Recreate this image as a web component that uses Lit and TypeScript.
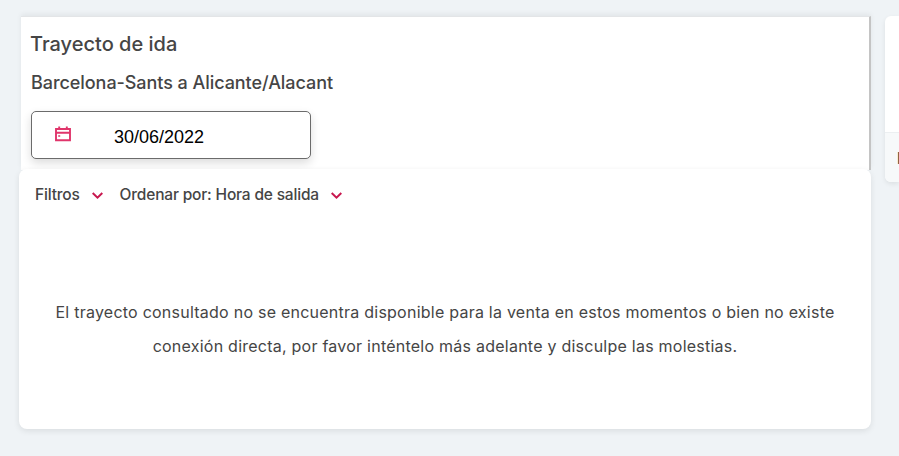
import { LitElement, html, css } from "lit";
import { customElement } from "lit/decorators.js";

const chevron = html`<svg class="chev" viewBox="0 0 11 7" width="11" height="7" fill="none" stroke="#c8184f" stroke-width="2"><path d="M.7 1 5.5 5.6 10.3 1"/></svg>`;

@customElement("app-root")
export class AppRoot extends LitElement {
  static styles = css`
    :host { display: block; width: 899px; height: 456px; background: #eff3f6; overflow: hidden; font-family: Inter, "Liberation Sans", sans-serif; color: #454545; }
    .page { display: grid; grid-template-columns: 852px 14px; column-gap: 14px; padding: 16px 0 0 19px; align-items: start; }
    .col { display: flex; flex-direction: column; }
    .top { margin: 0 0 0 2px; height: 154px; background: #fff; border-right: 2px solid #c4c4c4; border-top: 1px solid #e3e5e7; box-shadow: 0 -2px 5px rgba(0,0,0,.06); box-sizing: border-box; padding: 14px 0 0 9px; }
    h2 { margin: 0; font-size: 20px; line-height: 26px; font-weight: 550; letter-spacing: 0; }
    h3 { margin: 14px 0 0 1px; font-size: 18px; line-height: 24px; font-weight: 550; letter-spacing: -0.06px; }
    .date { margin: 16px 0 0 1px; width: 280px; height: 48px; box-sizing: border-box; background: #fff; border: 1px solid #6b6b6b; border-radius: 5px; box-shadow: 0 4px 10px rgba(0,0,0,.14); display: flex; align-items: center; padding: 4px 0 0 23px; font-family: "Liberation Sans", Arial, sans-serif; font-size: 18px; color: #000; }
    .date svg { margin-top: -6px; }
    .date span { margin-left: 43px; }
    .main { margin-top: -1px; height: 260px; background: #fff; border-radius: 8px; box-shadow: 0 2px 6px rgba(0,0,0,.09); box-sizing: border-box; }
    .filters { display: flex; align-items: center; padding: 16px 0 0 16px; font-size: 15.5px; line-height: 20px; font-weight: 500; letter-spacing: -0.18px; }
    .chev { margin: 1px 0 0 12px; }
    .second { margin-left: 17px; }
    .msg { margin: 90px 0 0; text-align: center; font-size: 16px; line-height: 34px; letter-spacing: 0.24px; }
    .side { height: 166px; background: #fff; border-radius: 6px 0 0 6px; box-shadow: 0 2px 5px rgba(0,0,0,.08); display: flex; flex-direction: column; justify-content: flex-end; }
    .tab { height: 49px; background: #f7f9fa; border-top: 1px solid #eceff1; border-radius: 0 0 0 6px; display: flex; align-items: center; padding-left: 12px; font-size: 16px; font-weight: 600; overflow: hidden; }
  `;
  render() {
    return html`<div class="page">
      <div class="col">
        <section class="top">
          <h2>Trayecto de ida</h2>
          <h3>Barcelona-Sants a Alicante/Alacant</h3>
          <div class="date">
            <svg viewBox="0 0 16 16" width="16" height="16" fill="none" stroke="#e0356b" stroke-width="1.9"><path d="M1 3h14v11.2H1zM1 6.8h14M4.2 .6V3M11.8 .6V3"/><path d="M3.2 10h2" stroke-width="1.5"/></svg>
            <span>30/06/2022</span>
          </div>
        </section>
        <section class="main">
          <div class="filters">
            <span>Filtros</span>${chevron}
            <span class="second">Ordenar por: Hora de salida</span>${chevron}
          </div>
          <p class="msg">El trayecto consultado no se encuentra disponible para la venta en estos momentos o bien no existe<br>conexión directa, por favor inténtelo más adelante y disculpe las molestias.</p>
        </section>
      </div>
      <aside class="side"><div class="tab">I</div></aside>
    </div>`;
  }
}
